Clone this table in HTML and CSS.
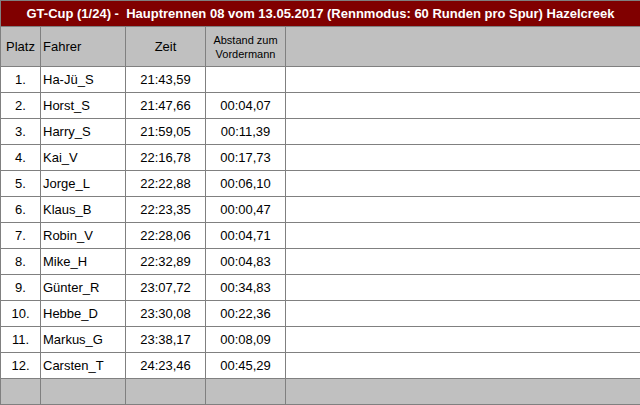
FILE: index.html
```html
<!DOCTYPE html>
<html lang="de">
<head>
    <meta charset="UTF-8">
    <title>Hauptrennen 08</title>
    <link rel="stylesheet" href="styles.css">
</head>
<body>
<table class="result">
    <colgroup>
        <col class="c_platz">
        <col class="c_fahrer">
        <col class="c_zeit">
        <col class="c_abstand">
        <col class="c_rest">
    </colgroup>
    <tr class="title">
        <td colspan="5">GT-Cup (1/24) -  Hauptrennen 08 vom 13.05.2017 (Rennmodus: 60 Runden pro Spur) Hazelcreek</td>
    </tr>
    <tr class="head">
        <td class="center">Platz</td>
        <td>Fahrer</td>
        <td class="center">Zeit</td>
        <td class="center small">Abstand zum<br>Vordermann</td>
        <td></td>
    </tr>
    <tr><td class="center">1.</td><td>Ha-Jü_S</td><td class="center">21:43,59</td><td class="center"></td><td></td></tr>
    <tr><td class="center">2.</td><td>Horst_S</td><td class="center">21:47,66</td><td class="center">00:04,07</td><td></td></tr>
    <tr><td class="center">3.</td><td>Harry_S</td><td class="center">21:59,05</td><td class="center">00:11,39</td><td></td></tr>
    <tr><td class="center">4.</td><td>Kai_V</td><td class="center">22:16,78</td><td class="center">00:17,73</td><td></td></tr>
    <tr><td class="center">5.</td><td>Jorge_L</td><td class="center">22:22,88</td><td class="center">00:06,10</td><td></td></tr>
    <tr><td class="center">6.</td><td>Klaus_B</td><td class="center">22:23,35</td><td class="center">00:00,47</td><td></td></tr>
    <tr><td class="center">7.</td><td>Robin_V</td><td class="center">22:28,06</td><td class="center">00:04,71</td><td></td></tr>
    <tr><td class="center">8.</td><td>Mike_H</td><td class="center">22:32,89</td><td class="center">00:04,83</td><td></td></tr>
    <tr><td class="center">9.</td><td>Günter_R</td><td class="center">23:07,72</td><td class="center">00:34,83</td><td></td></tr>
    <tr><td class="center">10.</td><td>Hebbe_D</td><td class="center">23:30,08</td><td class="center">00:22,36</td><td></td></tr>
    <tr><td class="center">11.</td><td>Markus_G</td><td class="center">23:38,17</td><td class="center">00:08,09</td><td></td></tr>
    <tr><td class="center">12.</td><td>Carsten_T</td><td class="center">24:23,46</td><td class="center">00:45,29</td><td></td></tr>
    <tr class="foot"><td></td><td></td><td></td><td></td><td></td></tr>
</table>
</body>
</html>
```
FILE: styles.css
```css
body{
    margin:0;
    background:#fff;
    font-family:"Liberation Sans",Arial,sans-serif;
}
.result{
    width:640px;
    table-layout:fixed;
    border-collapse:collapse;
    font-size:13px;
    color:#000;
}
.result td{
    border:1px solid #808080;
    padding:0 2px;
    height:25px;
    white-space:nowrap;
    overflow:hidden;
}
.c_platz{width:40px;}
.c_fahrer{width:85px;}
.c_zeit{width:80px;}
.c_abstand{width:80px;}
.c_rest{width:355px;}
.center{text-align:center;}
.title td{
    background:#800000;
    color:#fff;
    font-weight:bold;
    text-align:center;
    white-space:pre;
}
.head td{
    background:#c0c0c0;
    height:39px;
}
.head td.small{font-size:11px;line-height:14px;padding:0;}
.foot td{background:#c0c0c0;}
```
